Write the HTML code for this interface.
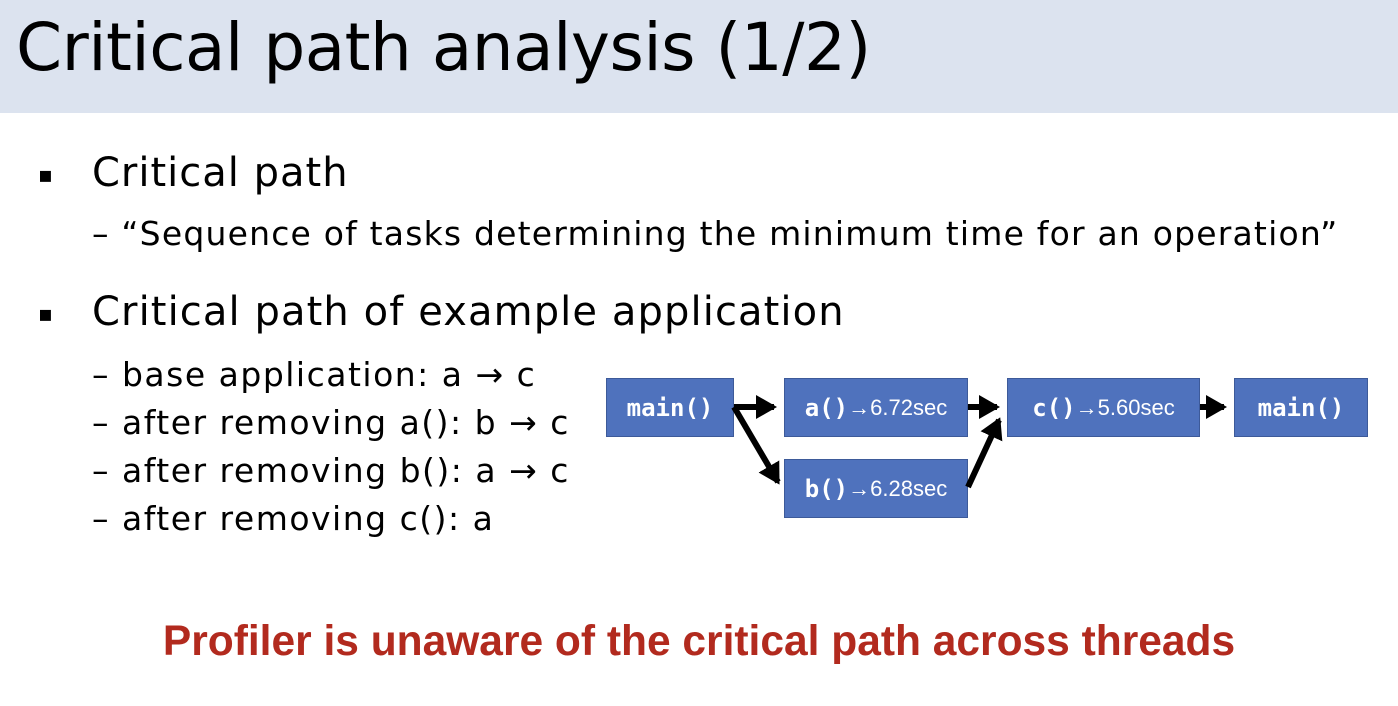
<!DOCTYPE html>
<html><head><meta charset="utf-8"><style>
body{margin:0;width:1398px;height:706px;background:#fff;position:relative;overflow:hidden;font-family:"DejaVu Sans","Liberation Sans",sans-serif;color:#000}
.hdr{position:absolute;left:0;top:0;width:1398px;height:113px;background:#dce3ef}
.t{position:absolute;white-space:nowrap}
.box{position:absolute;background:#4f72bd;border:1px solid #3d5a99;color:#fff;font-size:24px;display:flex;align-items:center;justify-content:center;box-sizing:border-box;font-family:"DejaVu Sans Mono","Liberation Mono",monospace;font-weight:bold}
.box span{font-family:"Liberation Sans",sans-serif;font-size:22px;font-weight:normal}
</style></head><body>
<div class="hdr"></div>
<div class="t" style="left:16px;top:9px;font-size:66px;letter-spacing:-0.5px">Critical path analysis (1/2)</div>
<div class="t" style="left:38px;top:163px;font-size:22px">▪</div>
<div class="t" style="left:92px;top:150px;font-size:40px;letter-spacing:1px">Critical path</div>
<div class="t" style="left:92px;top:214px;font-size:33px;letter-spacing:1.2px">– “Sequence of tasks determining the minimum time for an operation”</div>
<div class="t" style="left:38px;top:302px;font-size:22px">▪</div>
<div class="t" style="left:92px;top:289px;font-size:40px;letter-spacing:1.1px">Critical path of example application</div>
<div class="t" style="left:92px;top:351px;font-size:33px;line-height:48px;letter-spacing:1.5px">– base application: a → c<br>– after removing a(): b → c<br>– after removing b(): a → c<br>– after removing c(): a</div>
<div class="box" style="left:606px;top:378px;width:128px;height:59px">main()</div>
<div class="box" style="left:784px;top:378px;width:184px;height:59px">a()<span>→6.72sec</span></div>
<div class="box" style="left:784px;top:459px;width:184px;height:59px">b()<span>→6.28sec</span></div>
<div class="box" style="left:1007px;top:378px;width:193px;height:59px">c()<span>→5.60sec</span></div>
<div class="box" style="left:1234px;top:378px;width:134px;height:59px">main()</div>
<svg style="position:absolute;left:0;top:0" width="1398" height="706">
<defs><marker id="m" markerWidth="3.5" markerHeight="4" refX="3" refY="2" orient="auto"><path d="M0,0L3.5,2L0,4z" fill="#000"/></marker></defs>
<g stroke="#000" stroke-width="6" fill="none" marker-end="url(#m)">
<line x1="734" y1="407" x2="774" y2="407"/>
<line x1="734" y1="407" x2="778" y2="482"/>
<line x1="968" y1="407" x2="997" y2="407"/>
<line x1="968" y1="487" x2="999" y2="420"/>
<line x1="1200" y1="407" x2="1224" y2="407"/>
</g></svg>
<div class="t" style="left:0;width:1398px;text-align:center;top:618px;font-size:42.5px;font-weight:bold;color:#b22a1e;font-family:'Liberation Sans',sans-serif">Profiler is unaware of the critical path across threads</div>
</body></html>
